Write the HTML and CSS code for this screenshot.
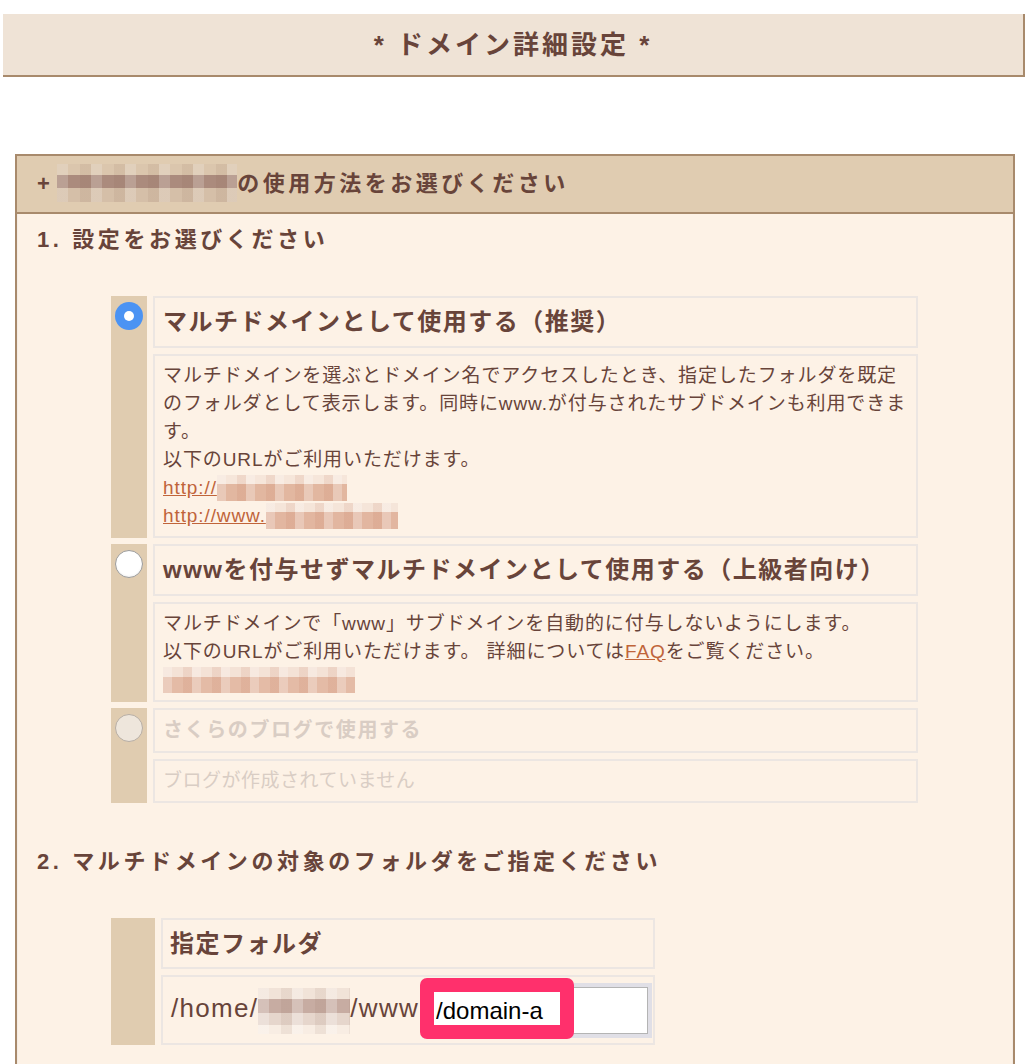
FILE: index.html
```html
<!DOCTYPE html>
<html lang="ja">
<head>
<meta charset="utf-8">
<title>ドメイン詳細設定</title>
<link rel="stylesheet" href="styles.css">
</head>
<body>
<div class="page-title"><h1>* ドメイン詳細設定 *</h1></div>

<section class="panel">
  <div class="panel-head"><span class="plus">+</span><span class="mosaic mosaic-head"></span>の使用方法をお選びください</div>
  <div class="panel-body">
    <h2 class="step step-first">1. 設定をお選びください</h2>
    <table class="choices">
      <tr>
        <td class="radio-cell" rowspan="2"><span class="radio checked"></span></td>
        <td class="opt-title">マルチドメインとして使用する（推奨）</td>
      </tr>
      <tr>
        <td class="opt-desc">マルチドメインを選ぶとドメイン名でアクセスしたとき、指定したフォルダを既定<br>のフォルダとして表示します。同時にwww.が付与されたサブドメインも利用できま<br>す。<br>以下のURLがご利用いただけます。<br><a href="#" class="link">http://<span class="mosaic mosaic-url1"></span></a><br><a href="#" class="link">http://www.<span class="mosaic mosaic-url2"></span></a></td>
      </tr>
      <tr>
        <td class="radio-cell" rowspan="2"><span class="radio"></span></td>
        <td class="opt-title">wwwを付与せずマルチドメインとして使用する（上級者向け）</td>
      </tr>
      <tr>
        <td class="opt-desc">マルチドメインで「www」サブドメインを自動的に付与しないようにします。<br>以下のURLがご利用いただけます。 詳細については<a href="#" class="link">FAQ</a>をご覧ください。<br><span class="mosaic mosaic-url3"></span></td>
      </tr>
      <tr>
        <td class="radio-cell" rowspan="2"><span class="radio disabled"></span></td>
        <td class="opt-title opt-disabled">さくらのブログで使用する</td>
      </tr>
      <tr>
        <td class="opt-desc desc-disabled">ブログが作成されていません</td>
      </tr>
    </table>

    <h2 class="step step-second">2. マルチドメインの対象のフォルダをご指定ください</h2>
    <table class="folder">
      <tr>
        <td class="tan-cell" rowspan="2"></td>
        <td class="opt-title">指定フォルダ</td>
      </tr>
      <tr>
        <td class="folder-cell">/home/<span class="mosaic mosaic-user"></span>/www<span class="input-wrap"><input class="folder-input" type="text" value="/domain-a"><span class="highlight"></span></span></td>
      </tr>
    </table>
  </div>
</section>
</body>
</html>
```

FILE: styles.css
```css
html, body {
  margin: 0;
  padding: 0;
  background: #ffffff;
}

body {
  font-family: "Liberation Sans", "Noto Sans CJK JP", sans-serif;
  color: #68443a;
}

.page-title {
  margin: 14px 7px 0 3px;
  height: 61px;
  background: #efe3d6;
  border-right: 2px solid #a88a6c;
  border-bottom: 2px solid #a88a6c;
  display: flex;
  align-items: center;
  justify-content: center;
}

.page-title h1 {
  margin: 0;
  font-size: 26px;
  font-weight: bold;
  letter-spacing: 3px;
  line-height: 32px;
  color: #68443a;
}

.panel {
  margin: 77px 0 0 15px;
  width: 996px;
  border: 2px solid #a88a6c;
  border-bottom: none;
}

.panel-head {
  height: 56px;
  background: #e0ccb1;
  border-bottom: 2px solid #a88a6c;
  padding-left: 20px;
  display: flex;
  align-items: center;
  font-size: 22px;
  font-weight: bold;
  letter-spacing: 3.5px;
  line-height: 32px;
}

.plus {
  margin-right: 4px;
}

.panel-body {
  background: #fdf2e6;
  border: 1px solid #f4ece4;
  border-top: none;
  padding: 0 0 60px 19px;
}

.step {
  margin: 0;
  font-size: 22px;
  font-weight: bold;
  letter-spacing: 3.6px;
  line-height: 32px;
}

.step-first {
  padding-top: 10px;
}

.step-second {
  margin-top: 37px;
}

table {
  border-collapse: separate;
  border-spacing: 6px;
  margin-left: 68px;
  table-layout: fixed;
}

.choices {
  margin-top: 34px;
  width: 819px;
}

.folder {
  margin-top: 34px;
  width: 556px;
}

td {
  padding: 0;
}

.radio-cell,
.tan-cell {
  background: #e0ccb0;
  vertical-align: top;
  padding: 6px 4px;
}

.radio-cell {
  width: 28px;
}

.tan-cell {
  width: 36px;
}

.opt-title {
  border: 2px solid #ece6e2;
  padding: 6px 8px 6.5px;
  font-size: 24px;
  font-weight: bold;
  letter-spacing: 1.5px;
  line-height: 35px;
  white-space: nowrap;
  overflow: hidden;
}

.folder .opt-title {
  padding-left: 7px;
}

.opt-desc {
  border: 2px solid #ece6e2;
  padding: 6px 8px 6.5px;
  font-size: 19px;
  letter-spacing: 0.9px;
  line-height: 28px;
  white-space: nowrap;
  overflow: hidden;
}

.opt-disabled {
  color: #d9cdc4;
  font-size: 20px;
  letter-spacing: 1.6px;
  line-height: 28px;
  padding: 6px 8px 6.5px;
}

.desc-disabled {
  color: #d9cdc4;
  letter-spacing: 0.5px;
  padding: 6px 8px;
}

.link {
  color: #c0643a;
  text-decoration: underline;
}

.radio {
  display: block;
  box-sizing: border-box;
  width: 28px;
  height: 28px;
  border-radius: 50%;
  position: relative;
}

.radio.checked {
  background: #4b93f3;
}

.radio.checked::after {
  content: "";
  position: absolute;
  left: 9px;
  top: 9px;
  width: 10px;
  height: 10px;
  border-radius: 50%;
  background: #ffffff;
}

.radio:not(.checked):not(.disabled) {
  background: #ffffff;
  border: 1px solid #9c9c9c;
  box-shadow: inset 0 -1px 2px rgba(0, 0, 0, 0.06);
}

.radio.disabled {
  background: #eee6dc;
  border: 1px solid #b7aea5;
}

.mosaic {
  display: inline-block;
  vertical-align: middle;
}

.mosaic-head {
  width: 180px;
  height: 38px;
  margin-top: -2px;
  background:
    repeating-linear-gradient(90deg, rgba(255,255,255,0.18) 0 11px, rgba(255,255,255,0) 11px 23px, rgba(120,80,60,0.08) 23px 34px),
    linear-gradient(to bottom, #dbc6ad 0 30%, #ab8b7d 30% 62%, #d5bfa8 62% 100%);
}

.mosaic-url1 {
  width: 130px;
  height: 26px;
  vertical-align: -7px;
  background:
    repeating-linear-gradient(90deg, rgba(255,255,255,0.25) 0 9px, rgba(255,255,255,0) 9px 20px, rgba(190,110,80,0.12) 20px 29px),
    linear-gradient(to bottom, #f6e6da 0 35%, #e2b7a0 35% 100%);
}

.mosaic-url2 {
  width: 132px;
  height: 26px;
  vertical-align: -7px;
  background:
    repeating-linear-gradient(90deg, rgba(255,255,255,0.25) 0 9px, rgba(255,255,255,0) 9px 20px, rgba(190,110,80,0.12) 20px 29px),
    linear-gradient(to bottom, #f5e5d9 0 35%, #e2b6a0 35% 100%);
}

.mosaic-url3 {
  width: 192px;
  height: 26px;
  vertical-align: -7px;
  background:
    repeating-linear-gradient(90deg, rgba(255,255,255,0.25) 0 9px, rgba(255,255,255,0) 9px 20px, rgba(190,110,80,0.12) 20px 29px),
    linear-gradient(to bottom, #f4e2d6 0 40%, #e4bba6 40% 100%);
}

.folder-cell {
  border: 2px solid #ece6e2;
  padding: 10px 7px 9px 8px;
  font-size: 26px;
  letter-spacing: 1.3px;
  line-height: 28px;
  white-space: nowrap;
}

.mosaic-user {
  width: 92px;
  height: 46px;
  vertical-align: middle;
  background:
    repeating-linear-gradient(90deg, rgba(255,255,255,0.25) 0 11px, rgba(255,255,255,0) 11px 23px, rgba(120,80,60,0.08) 23px 34px),
    linear-gradient(to bottom, #f1e3d8 0 25%, #c7aca2 25% 55%, #e6d6cc 55% 80%, #f8ede3 80% 100%);
}

.input-wrap {
  position: relative;
  display: inline-block;
  vertical-align: middle;
  margin-left: 7px;
  letter-spacing: 0;
}

.folder-input {
  display: block;
  box-sizing: border-box;
  width: 222px;
  height: 47px;
  margin: 0;
  padding: 0 0 0 9px;
  border: 1px solid #b4b4b4;
  border-radius: 0;
  box-shadow: 0 0 0 4px #e0dfe6;
  background: #ffffff;
  font-family: "Liberation Sans", sans-serif;
  font-size: 24px;
  color: #000000;
  outline: none;
}

.highlight {
  position: absolute;
  left: -6px;
  top: -9px;
  width: 154px;
  height: 61px;
  box-sizing: border-box;
  border: 14px solid #ff306c;
  border-radius: 7px;
  pointer-events: none;
}
```
